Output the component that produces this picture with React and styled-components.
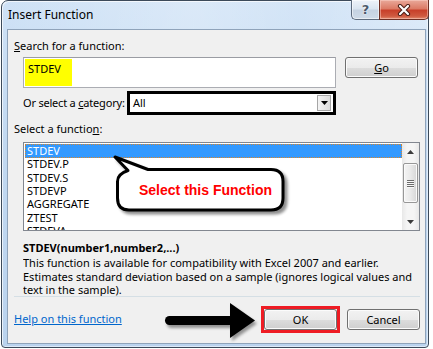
import React from "react";
import styled, { createGlobalStyle, css } from "styled-components";

const GlobalStyle = createGlobalStyle`
  html, body { margin: 0; padding: 0; background: #ffffff; }
  body { font-family: "Noto Sans", "Open Sans", sans-serif; font-size: 11px; color: #000; }
  * { box-sizing: border-box; }
`;

const Window = styled.div`
  position: relative;
  margin-left: 1px;
  width: 428px;
  height: 348px;
  border: 1px solid #3c4a5a;
  border-radius: 7px 7px 4px 4px;
  background: linear-gradient(180deg, #cfe2f6 0%, #c2d9f1 40%, #bad3ee 100%);
  display: flex;
  flex-direction: column;
  padding: 0 2px 3px 5px;
  box-shadow: inset 1px 1px 0 rgba(255,255,255,0.7), inset -1px -1px 0 rgba(255,255,255,0.5);
`;

const TitleBar = styled.div`
  height: 28px;
  display: flex;
  align-items: center;
  background: linear-gradient(90deg, rgba(255,255,255,0) 0%, rgba(255,255,255,0.25) 45%, rgba(255,255,255,0.1) 70%, rgba(255,255,255,0.3) 100%);
  margin: 0 -2px 0 -5px;
  padding-left: 6px;
`;

const Title = styled.div`
  font-size: 12px;
  color: #000;
  flex: 1;
  padding-bottom: 1px;
`;

const Captions = styled.div`
  align-self: flex-start;
  display: flex;
  margin-top: -1px;
  margin-right: -1px;
  height: 20px;
`;

const CaptionButton = styled.div`
  height: 20px;
  display: flex;
  align-items: center;
  justify-content: center;
  border: 1px solid #5d6b7d;
  border-top: none;
  ${(p) =>
    p.$close
      ? css`
          width: 50px;
          border-color: #6e2f24;
          border-radius: 0 0 5px 0;
          background: linear-gradient(180deg, #e9a99a 0%, #dc7b66 45%, #c8402a 55%, #cf5a40 85%, #e48c70 100%);
          box-shadow: inset 0 0 0 1px rgba(255,220,210,0.45);
        `
      : css`
          width: 28px;
          border-right: none;
          border-radius: 0 0 0 5px;
          background: linear-gradient(180deg, #eef3f9 0%, #dbe5f0 45%, #c6d3e2 55%, #cfdbe8 100%);
          box-shadow: inset 0 0 0 1px rgba(255,255,255,0.55);
        `}
`;

const HelpGlyph = styled.span`
  font-family: "DejaVu Sans", sans-serif;
  font-weight: bold;
  font-size: 13px;
  color: #4c5a6c;
  text-shadow: 0 0 2px #fff, 0 0 1px #fff;
  line-height: 1;
`;

const Client = styled.div`
  position: relative;
  flex: 1;
  border: 1px solid #8fa3ba;
  background: #f0f0f0;
  padding: 8px 5px 0 6px;
  display: flex;
  flex-direction: column;
`;

const Label = styled.div`
  line-height: 16px;
  height: 16px;
  margin-top: ${(p) => p.$mt || 0}px;
  white-space: nowrap;
`;

const Row = styled.div`
  display: flex;
  align-items: ${(p) => p.$align || "flex-start"};
  margin-top: ${(p) => p.$mt || 0}px;
  margin-left: 9px;
`;

const SearchBox = styled.div`
  width: 313px;
  height: 31px;
  border: 1px solid #abadb3;
  border-top-color: #9a9ca3;
  background: #fff;
  padding: 1px;
  display: flex;
`;

const Highlight = styled.div`
  width: 47px;
  background: #ffff00;
  padding: 2px 0 0 3px;
  line-height: 16px;
`;

const Button = styled.div`
  width: 73px;
  height: 21px;
  border: 1px solid #707070;
  border-radius: 3px;
  background: linear-gradient(180deg, #f2f2f2 0%, #ebebeb 50%, #dddddd 51%, #cfcfcf 100%);
  box-shadow: inset 0 0 0 1px #fbfbfb;
  display: flex;
  align-items: center;
  justify-content: center;
  line-height: 16px;
  margin-left: ${(p) => p.$ml || 0}px;
`;

const Marker = styled.div`
  border: 3px solid #ee1c24;
  padding: 0;
  margin: -3px 0;
  display: flex;
`;

const InlineLabel = styled.div`
  width: 104px;
  white-space: nowrap;
  line-height: 16px;
  letter-spacing: -0.2px;
`;

const Select = styled.div`
  width: 209px;
  height: 24px;
  border: 3px solid #000;
  background: #fff;
  display: flex;
  align-items: center;
  padding: 0 2px 0 3px;
`;

const SelectText = styled.div`
  flex: 1;
  line-height: 16px;
`;

const DropButton = styled.div`
  width: 14px;
  height: 16px;
  border: 1px solid #a6a6a6;
  background: linear-gradient(90deg, #f4f4f4, #dcdcdc);
  display: flex;
  align-items: center;
  justify-content: center;
`;

const ListBox = styled.div`
  margin-top: 5px;
  margin-left: 9px;
  height: 89px;
  border: 1px solid #828790;
  background: #fff;
  display: flex;
  overflow: hidden;
`;

const Items = styled.div`
  flex: 1;
  padding: 1px 0 0 1px;
  overflow: hidden;
`;

const Item = styled.div`
  height: 13.33px;
  line-height: 13.33px;
  padding-left: 2px;
  white-space: nowrap;
  ${(p) =>
    p.$selected &&
    css`
      background: #3399ff;
      color: #fff;
      outline: 1px dotted #d9862c;
      outline-offset: -1px;
      height: 14px;
      line-height: 14px;
      margin-bottom: -0.67px;
    `}
`;

const ScrollBar = styled.div`
  width: 17px;
  background: linear-gradient(90deg, #e8e8e8, #f5f5f5 30%, #f5f5f5 70%, #e8e8e8);
  display: flex;
  flex-direction: column;
  align-items: center;
`;

const ArrowCell = styled.div`
  height: 17px;
  width: 17px;
  display: flex;
  align-items: center;
  justify-content: center;
`;

const Thumb = styled.div`
  margin-top: 3px;
  width: 15px;
  height: 40px;
  border: 1px solid #979797;
  border-radius: 2px;
  background: linear-gradient(90deg, #f4f4f4 0%, #e9e9e9 50%, #d6d6d6 100%);
  box-shadow: inset 0 0 0 1px #fafafa;
  display: flex;
  flex-direction: column;
  align-items: center;
  justify-content: center;
  gap: 1px;
`;

const Grip = styled.div`
  width: 7px;
  height: 1px;
  background: #6b6b6b;
  box-shadow: 0 1px 0 #f8f8f8;
`;

const TrackFill = styled.div`
  flex: 1;
`;

const Signature = styled.div`
  margin-top: 9px;
  margin-left: 9px;
  font-weight: bold;
  line-height: 16px;
  height: 16px;
`;

const Description = styled.div`
  margin-left: 9px;
  line-height: 13.5px;
  height: 40px;
  overflow: hidden;
  white-space: nowrap;
`;

const Separator = styled.div`
  height: 1px;
  background: #d5dfe5;
`;

const Footer = styled.div`
  margin-top: 12px;
  display: flex;
  align-items: center;
`;

const HelpLink = styled.a`
  color: #0066cc;
  text-decoration: underline;
  line-height: 16px;
  margin-top: -2px;
  flex: 1;
  cursor: pointer;
`;

const Callout = styled.div`
  position: absolute;
  left: 100px;
  top: 120px;
  width: 190px;
  height: 70px;
`;

const CalloutText = styled.span`
  position: absolute;
  left: 31px;
  top: 31px;
  line-height: 18px;
  font-family: "Liberation Sans", Arial, sans-serif;
  font-weight: bold;
  font-size: 14px;
  color: #ff0000;
  white-space: nowrap;
`;

const ArrowOverlay = styled.svg`
  position: absolute;
  left: 150px;
  top: 268px;
`;

const u = (s) => <u style={{ textDecorationThickness: "1px" }}>{s}</u>;

export default function App() {
  const items = ["STDEV", "STDEV.P", "STDEV.S", "STDEVP", "AGGREGATE", "ZTEST", "STDEVA"];
  return (
    <>
      <GlobalStyle />
      <Window>
        <TitleBar>
          <Title>Insert Function</Title>
          <Captions>
            <CaptionButton>
              <HelpGlyph>?</HelpGlyph>
            </CaptionButton>
            <CaptionButton $close>
              <svg width="14" height="12" viewBox="0 0 14 12">
                <path d="M3 2 L11 10 M11 2 L3 10" stroke="#4a1e16" strokeWidth="4.2" strokeLinecap="round" />
                <path d="M3 2 L11 10 M11 2 L3 10" stroke="#ffffff" strokeWidth="2.2" strokeLinecap="round" />
              </svg>
            </CaptionButton>
          </Captions>
        </TitleBar>
        <Client>
          <Label>{u("S")}earch for a function:</Label>
          <Row $mt={3}>
            <SearchBox>
              <Highlight>STDEV</Highlight>
            </SearchBox>
            <Button $ml={9}>{u("G")}o</Button>
          </Row>
          <Row $mt={3} $align="center">
            <InlineLabel>Or select a {u("c")}ategory:</InlineLabel>
            <Select>
              <SelectText>All</SelectText>
              <DropButton>
                <svg width="7" height="4" viewBox="0 0 7 4">
                  <path d="M0 0 H7 L3.5 4 Z" fill="#000" />
                </svg>
              </DropButton>
            </Select>
          </Row>
          <Label $mt={6}>Select a functio{u("n")}:</Label>
          <ListBox>
            <Items>
              {items.map((it, i) => (
                <Item key={it} $selected={i === 0}>
                  {it}
                </Item>
              ))}
            </Items>
            <ScrollBar>
              <ArrowCell>
                <svg width="7" height="4" viewBox="0 0 7 4">
                  <path d="M3.5 0 L7 4 H0 Z" fill="#3c3c3c" />
                </svg>
              </ArrowCell>
              <Thumb>
                <Grip />
                <Grip />
                <Grip />
                <Grip />
              </Thumb>
              <TrackFill />
              <ArrowCell>
                <svg width="7" height="4" viewBox="0 0 7 4">
                  <path d="M0 0 H7 L3.5 4 Z" fill="#3c3c3c" />
                </svg>
              </ArrowCell>
            </ScrollBar>
          </ListBox>
          <Signature>STDEV(number1,number2,...)</Signature>
          <Description>
            This function is available for compatibility with Excel 2007 and earlier.
            <br />
            Estimates standard deviation based on a sample (ignores logical values and
            <br />
            text in the sample).
          </Description>
          <Separator />
          <Footer>
            <HelpLink>Help on this function</HelpLink>
            <Marker>
              <Button>OK</Button>
            </Marker>
            <Button $ml={7}>Cancel</Button>
          </Footer>

          <Callout>
            <svg width="190" height="70" viewBox="0 0 190 70" style={{ position: "absolute", left: 0, top: 0 }}>
              <defs>
                <filter id="sh" x="-10%" y="-10%" width="130%" height="140%">
                  <feGaussianBlur in="SourceAlpha" stdDeviation="1.5" />
                  <feOffset dx="3" dy="3" result="o" />
                  <feComponentTransfer>
                    <feFuncA type="linear" slope="0.45" />
                  </feComponentTransfer>
                  <feMerge>
                    <feMergeNode />
                    <feMergeNode in="SourceGraphic" />
                  </feMerge>
                </filter>
              </defs>
              <path
                d="M7 7 L40 19.5 H163 Q175 19.5 175 31.5 V48 Q175 60 163 60 H21 Q9.5 60 9.5 48 V31.5 Q9.5 24 20 20.5 Z"
                fill="#fff"
                stroke="#000"
                strokeWidth="3"
                strokeLinejoin="round"
                filter="url(#sh)"
              />
            </svg>
            <CalloutText>Select this Function</CalloutText>
          </Callout>

          <ArrowOverlay width="105" height="48" viewBox="0 0 105 48">
            <defs>
              <filter id="sh2" x="-10%" y="-10%" width="130%" height="140%">
                <feGaussianBlur in="SourceAlpha" stdDeviation="1.5" />
                <feOffset dx="2" dy="3" result="o" />
                <feComponentTransfer>
                  <feFuncA type="linear" slope="0.4" />
                </feComponentTransfer>
                <feMerge>
                  <feMergeNode />
                  <feMergeNode in="SourceGraphic" />
                </feMerge>
              </filter>
            </defs>
            <g filter="url(#sh2)">
              <rect x="7" y="18" width="70" height="9" rx="4.5" fill="#000" />
              <path d="M72 5 L97 22.5 L72 40 Z" fill="#000" />
            </g>
          </ArrowOverlay>
        </Client>
      </Window>
    </>
  );
}
